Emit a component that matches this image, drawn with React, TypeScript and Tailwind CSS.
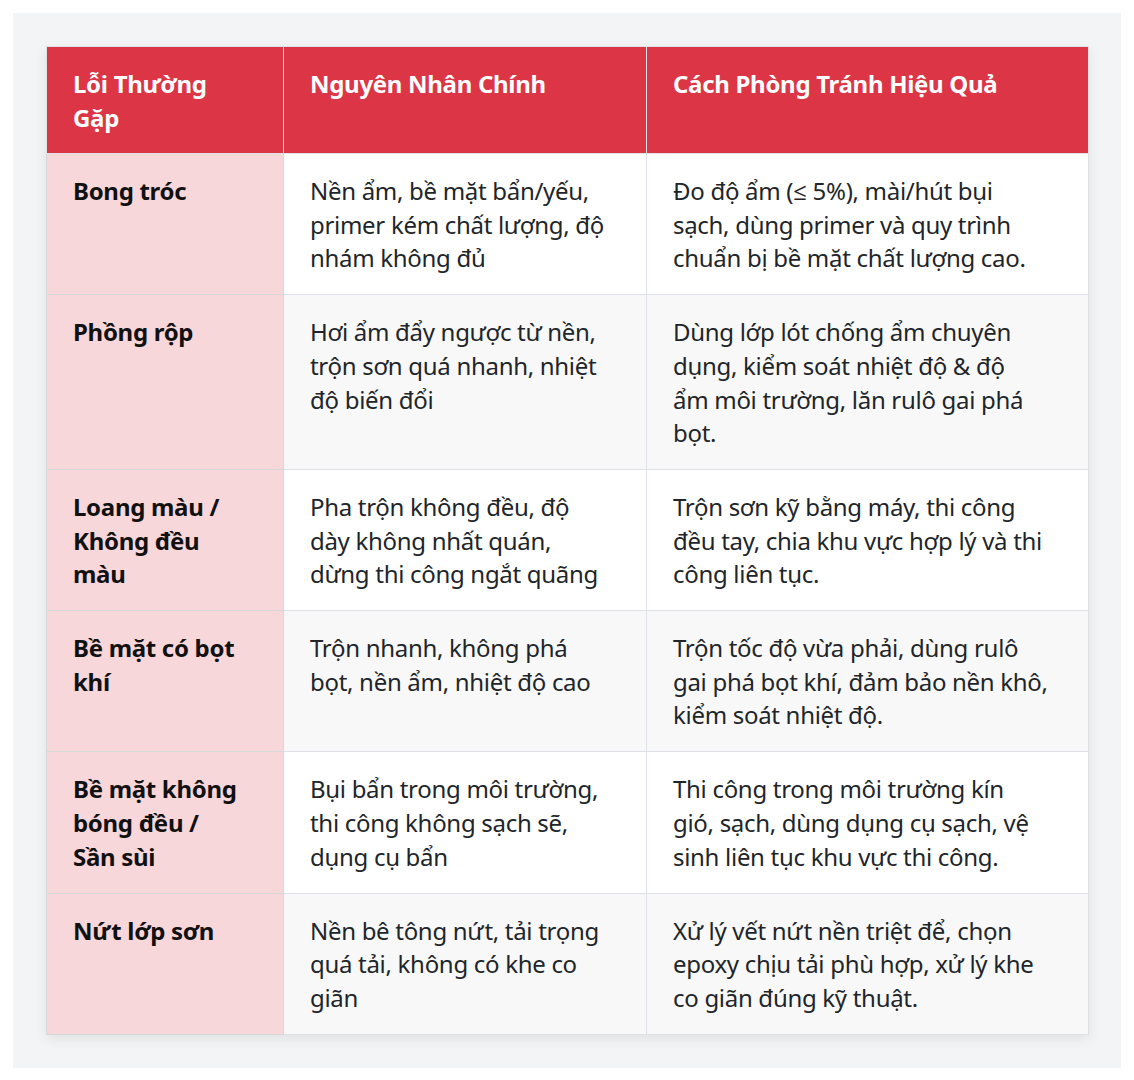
import React from "react";

const rows: { a: string[]; b: string[]; c: string[] }[] = [
  {
    a: ["Bong tróc"],
    b: ["Nền ẩm, bề mặt bẩn/yếu,", "primer kém chất lượng, độ", "nhám không đủ"],
    c: ["Đo độ ẩm (≤ 5%), mài/hút bụi", "sạch, dùng primer và quy trình", "chuẩn bị bề mặt chất lượng cao."],
  },
  {
    a: ["Phồng rộp"],
    b: ["Hơi ẩm đẩy ngược từ nền,", "trộn sơn quá nhanh, nhiệt", "độ biến đổi"],
    c: ["Dùng lớp lót chống ẩm chuyên", "dụng, kiểm soát nhiệt độ & độ", "ẩm môi trường, lăn rulô gai phá", "bọt."],
  },
  {
    a: ["Loang màu /", "Không đều", "màu"],
    b: ["Pha trộn không đều, độ", "dày không nhất quán,", "dừng thi công ngắt quãng"],
    c: ["Trộn sơn kỹ bằng máy, thi công", "đều tay, chia khu vực hợp lý và thi", "công liên tục."],
  },
  {
    a: ["Bề mặt có bọt", "khí"],
    b: ["Trộn nhanh, không phá", "bọt, nền ẩm, nhiệt độ cao"],
    c: ["Trộn tốc độ vừa phải, dùng rulô", "gai phá bọt khí, đảm bảo nền khô,", "kiểm soát nhiệt độ."],
  },
  {
    a: ["Bề mặt không", "bóng đều /", "Sần sùi"],
    b: ["Bụi bẩn trong môi trường,", "thi công không sạch sẽ,", "dụng cụ bẩn"],
    c: ["Thi công trong môi trường kín", "gió, sạch, dùng dụng cụ sạch, vệ", "sinh liên tục khu vực thi công."],
  },
  {
    a: ["Nứt lớp sơn"],
    b: ["Nền bê tông nứt, tải trọng", "quá tải, không có khe co", "giãn"],
    c: ["Xử lý vết nứt nền triệt để, chọn", "epoxy chịu tải phù hợp, xử lý khe", "co giãn đúng kỹ thuật."],
  },
];

function Lines({ lines }: { lines: string[] }) {
  return (
    <>
      {lines.map((l, i) => (
        <span key={i} className="block whitespace-nowrap">
          {l}
        </span>
      ))}
    </>
  );
}

export default function App() {
  return (
    <div className="bg-white p-[13px]" style={{ fontFamily: '"Noto Sans", "Open Sans", sans-serif' }}>
      <div className="bg-[#f3f4f6] p-[33px]">
        <table className="table-fixed border-collapse w-[1042px] shadow-[0_4px_12px_rgba(0,0,0,0.08)] text-[24px] leading-[1.4] tracking-[-0.3px]">
          <colgroup>
            <col className="w-[237px]" />
            <col className="w-[363px]" />
            <col className="w-[442px]" />
          </colgroup>
          <thead>
            <tr className="bg-[#dc3545] text-white">
              <th className="border border-[#dee2e6] px-[26px] pt-[20px] pb-[19px] text-left align-top font-bold">
                <Lines lines={["Lỗi Thường", "Gặp"]} />
              </th>
              <th className="border border-[#dee2e6] px-[26px] pt-[20px] pb-[19px] text-left align-top font-bold">
                <Lines lines={["Nguyên Nhân Chính"]} />
              </th>
              <th className="border border-[#dee2e6] px-[26px] pt-[20px] pb-[19px] text-left align-top font-bold">
                <Lines lines={["Cách Phòng Tránh Hiệu Quả"]} />
              </th>
            </tr>
          </thead>
          <tbody>
            {rows.map((r, i) => (
              <tr key={i} className={i % 2 === 1 ? "bg-[#f8f8f8]" : "bg-white"}>
                <td className="border border-[#d8d8d8] bg-[#f8d7da] px-[26px] pt-[20px] pb-[19.4px] align-top font-bold text-[#111]">
                  <Lines lines={r.a} />
                </td>
                <td className="border border-[#dee2e6] px-[26px] pt-[20px] pb-[19.4px] align-top text-[#212529]">
                  <Lines lines={r.b} />
                </td>
                <td className="border border-[#dee2e6] px-[26px] pt-[20px] pb-[19.4px] align-top text-[#212529]">
                  <Lines lines={r.c} />
                </td>
              </tr>
            ))}
          </tbody>
        </table>
      </div>
    </div>
  );
}
